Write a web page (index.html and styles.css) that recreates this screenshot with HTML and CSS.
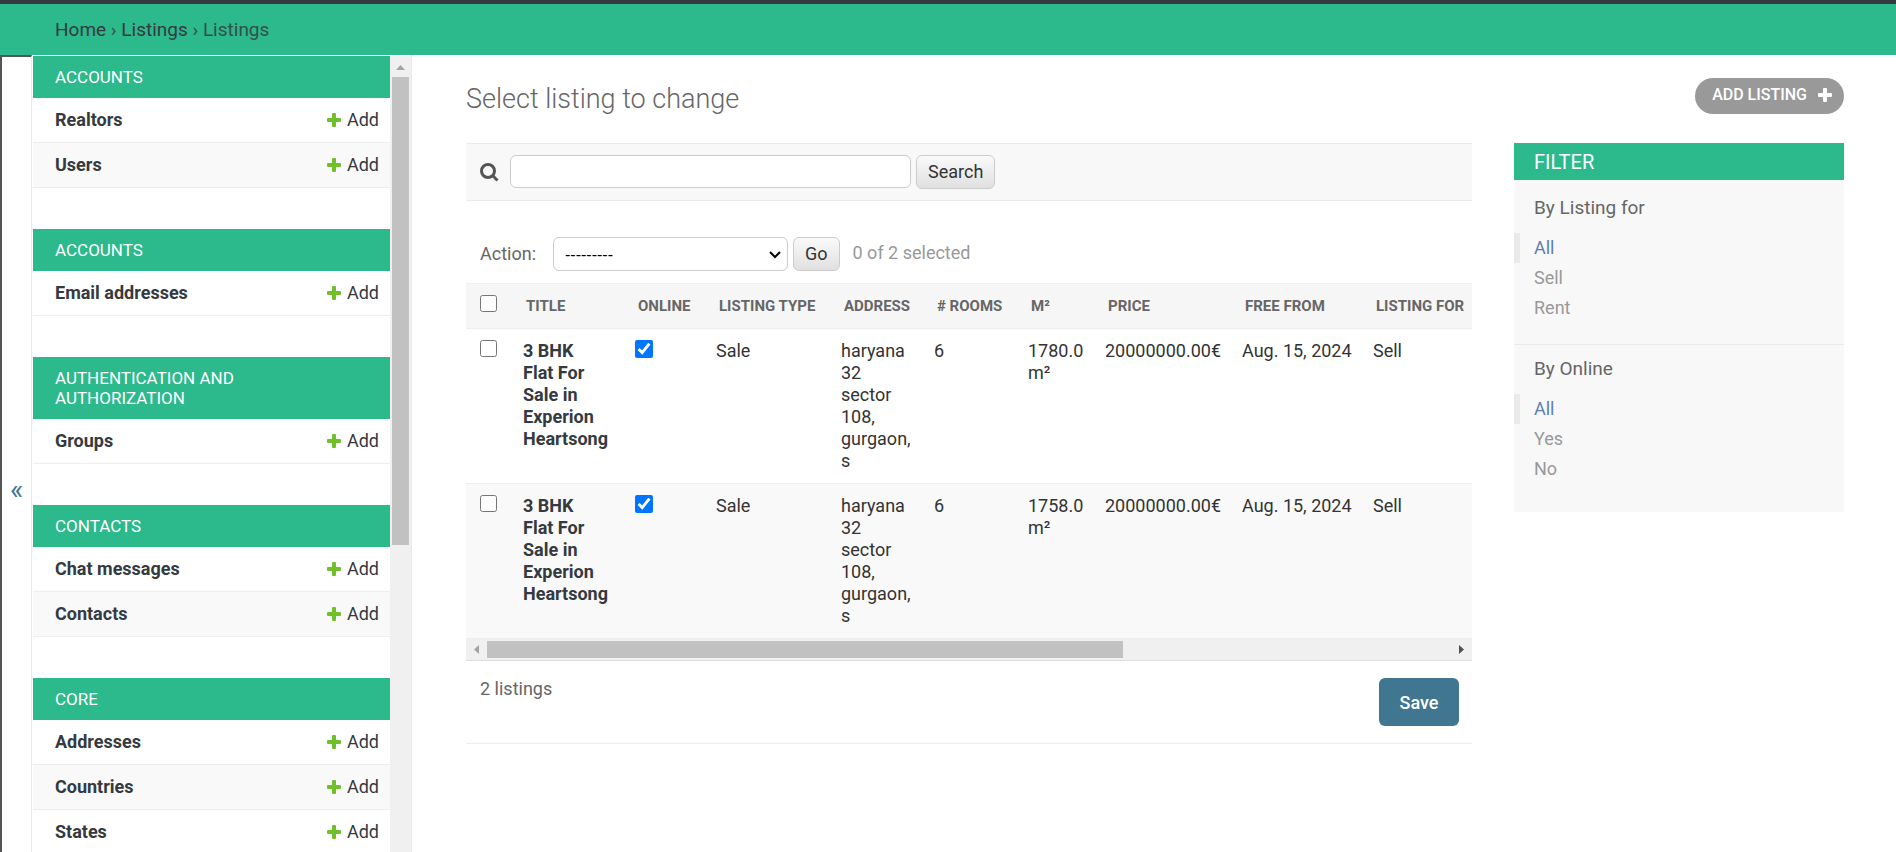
FILE: index.html
```html
<!DOCTYPE html>
<html lang="en">
<head>
<meta charset="utf-8">
<title>Select listing to change</title>
<link rel="stylesheet" href="styles.css">
</head>
<body>
<svg class="sprite" aria-hidden="true">
  <symbol id="plus" viewBox="0 0 14 14"><path d="M5 1q0-1 1-1h2q1 0 1 1v4h4q1 0 1 1v2q0 1-1 1H9v4q0 1-1 1H6q-1 0-1-1V9H1q-1 0-1-1V6q0-1 1-1h4z"/></symbol>
</svg>
<nav class="breadcrumbs" aria-label="Breadcrumbs"><a href="#">Home</a> › <a href="#">Listings</a> › Listings</nav>
<div class="main">
  <button class="toggle" type="button" aria-label="Toggle navigation">«</button>
  <nav class="sidebar" aria-label="Sidebar">
    <div class="apps">
      <section class="app">
        <h2><a href="#">Accounts</a></h2>
        <ul>
          <li><a class="model" href="#">Realtors</a><a class="add" href="#"><svg><use href="#plus"/></svg>Add</a></li>
          <li><a class="model" href="#">Users</a><a class="add" href="#"><svg><use href="#plus"/></svg>Add</a></li>
        </ul>
      </section>
      <section class="app">
        <h2><a href="#">Accounts</a></h2>
        <ul>
          <li><a class="model" href="#">Email addresses</a><a class="add" href="#"><svg><use href="#plus"/></svg>Add</a></li>
        </ul>
      </section>
      <section class="app">
        <h2><a href="#">Authentication and Authorization</a></h2>
        <ul>
          <li><a class="model" href="#">Groups</a><a class="add" href="#"><svg><use href="#plus"/></svg>Add</a></li>
        </ul>
      </section>
      <section class="app">
        <h2><a href="#">Contacts</a></h2>
        <ul>
          <li><a class="model" href="#">Chat messages</a><a class="add" href="#"><svg><use href="#plus"/></svg>Add</a></li>
          <li><a class="model" href="#">Contacts</a><a class="add" href="#"><svg><use href="#plus"/></svg>Add</a></li>
        </ul>
      </section>
      <section class="app">
        <h2><a href="#">Core</a></h2>
        <ul>
          <li><a class="model" href="#">Addresses</a><a class="add" href="#"><svg><use href="#plus"/></svg>Add</a></li>
          <li><a class="model" href="#">Countries</a><a class="add" href="#"><svg><use href="#plus"/></svg>Add</a></li>
          <li><a class="model" href="#">States</a><a class="add" href="#"><svg><use href="#plus"/></svg>Add</a></li>
        </ul>
      </section>
    </div>
    <div class="vbar" aria-hidden="true">
      <svg class="arrow-up" viewBox="0 0 9 5"><path d="M0 5L4.500 0L9 5z"/></svg>
      <div class="vthumb"></div>
    </div>
  </nav>
  <main class="content">
    <header class="title-row">
      <h1>Select listing to change</h1>
      <a class="add-listing" href="#">ADD LISTING<svg><use href="#plus"/></svg></a>
    </header>
    <div class="columns">
      <div class="changelist">
        <form class="search">
          <label for="searchbar" aria-label="Search"><svg class="lens" viewBox="0 0 19 19"><circle cx="8" cy="8" r="6.500"/><path d="M12.800 12.800L17.500 17.500"/></svg></label>
          <input id="searchbar" type="text">
          <button class="btn" type="submit">Search</button>
        </form>
        <form class="actions">
          <label for="action">Action:</label>
          <span class="picker"><select id="action"><option>---------</option></select><svg class="chevron" viewBox="0 0 14 9" aria-hidden="true"><path d="M2 2l5 5 5-5"/></svg></span>
          <button class="btn" type="button">Go</button>
          <span class="counter">0 of 2 selected</span>
        </form>
        <div class="results">
          <table>
            <colgroup><col class="c-check"><col class="c-title"><col class="c-online"><col class="c-type"><col class="c-address"><col class="c-rooms"><col class="c-area"><col class="c-price"><col class="c-free"><col></colgroup>
            <thead>
              <tr><th><input type="checkbox" aria-label="Select all"></th><th>Title</th><th>Online</th><th>Listing type</th><th>Address</th><th># Rooms</th><th>M²</th><th>Price</th><th>Free from</th><th>Listing for</th></tr>
            </thead>
            <tbody>
              <tr><td><input type="checkbox" aria-label="Select listing"></td><td class="name"><a href="#">3 BHK Flat For Sale in Experion Heartsong</a></td><td><input type="checkbox" aria-label="Online" checked></td><td>Sale</td><td>haryana 32 sector 108, gurgaon, s</td><td>6</td><td>1780.0 m²</td><td>20000000.00€</td><td class="date">Aug. 15, 2024</td><td>Sell</td></tr>
              <tr><td><input type="checkbox" aria-label="Select listing"></td><td class="name"><a href="#">3 BHK Flat For Sale in Experion Heartsong</a></td><td><input type="checkbox" aria-label="Online" checked></td><td>Sale</td><td>haryana 32 sector 108, gurgaon, s</td><td>6</td><td>1758.0 m²</td><td>20000000.00€</td><td class="date">Aug. 15, 2024</td><td>Sell</td></tr>
            </tbody>
          </table>
        </div>
        <div class="hbar" aria-hidden="true">
          <svg class="arrow-left" viewBox="0 0 5 9"><path d="M5 0L0 4.500L5 9z"/></svg>
          <div class="htrack"><div class="hthumb"></div></div>
          <svg class="arrow-right" viewBox="0 0 5 9"><path d="M0 0L5 4.500L0 9z"/></svg>
        </div>
        <footer class="paginator"><span>2 listings</span><button class="save" type="button">Save</button></footer>
      </div>
      <aside class="filter">
        <h2>Filter</h2>
        <h3>By Listing for</h3>
        <ul>
          <li class="selected"><a href="#">All</a></li>
          <li><a href="#">Sell</a></li>
          <li><a href="#">Rent</a></li>
        </ul>
        <h3>By Online</h3>
        <ul>
          <li class="selected"><a href="#">All</a></li>
          <li><a href="#">Yes</a></li>
          <li><a href="#">No</a></li>
        </ul>
      </aside>
    </div>
  </main>
</div>
</body>
</html>
```
FILE: styles.css
```css
* { box-sizing: border-box; }
body {
  margin: 0;
  height: 100vh;
  display: flex;
  flex-direction: column;
  overflow: hidden;
  background: #fff;
  color: #333;
  font-family: Roboto, "Liberation Sans", sans-serif;
  font-size: 18px;
  line-height: 22px;
}
a { color: inherit; text-decoration: none; }
ul { list-style: none; margin: 0; padding: 0; }
h1, h2, h3 { margin: 0; font-weight: 400; }
button, input, select { font-family: inherit; font-size: 18px; }
.sprite { display: none; }

.breadcrumbs {
  flex: none;
  padding: 15px 55px 14px;
  border-top: 4px solid #343a40;
  background: #2cb98b;
  color: #32504a;
  font-size: 19px;
}
.breadcrumbs a { color: #343a40; }

.main { flex: 1; display: flex; min-height: 0; }
.toggle {
  flex: none;
  width: 32px;
  padding: 70px 0 0;
  border: solid #555;
  border-width: 2px 0 0 2px;
  border-right: 1px solid #eaeaea;
  background: #fff;
  color: #417690;
  font-size: 28px;
}

.sidebar {
  flex: none;
  display: flex;
  width: 380px;
  padding-top: 1px;
  padding-left: 1px;
  border-right: 1px solid #eaeaea;
  overflow: hidden;
}
.apps { flex: 1; overflow: hidden; }
.app { margin-bottom: 41px; }
.app h2 {
  padding: 11px 66px 11px 22px;
  background: #2cb98b;
  color: #fff;
  font-size: 17px;
  line-height: 20px;
  text-transform: uppercase;
}
.app li {
  display: flex;
  justify-content: space-between;
  padding: 11px 11px 11px 22px;
  border-bottom: 1px solid #eee;
}
.app li:nth-child(even) { background: #f9f9f9; }
.model, .name a { color: #343a40; font-weight: 700; }
.add { display: flex; align-items: center; gap: 6px; color: #343a40; }
.add svg { width: 14px; height: 14px; fill: #70bf2b; }
.vbar {
  flex: none;
  width: 21px;
  padding: 9px 2px 0;
  background: #f0f0f0;
}
.arrow-up { display: block; width: 9px; height: 5px; margin: 0 4px 7px; fill: #a3a3a3; }
.vthumb { width: 17px; height: 59.5%; background: #c1c1c1; }

.content { flex: 1; min-width: 0; padding: 23px 52px 0 54px; }
.title-row { display: flex; justify-content: space-between; height: 65px; }
h1 { padding-top: 4px; color: #666; font-size: 27px; font-weight: 300; line-height: 34px; }
.add-listing {
  display: flex;
  align-items: center;
  gap: 11px;
  height: 36px;
  padding: 0 12px 2px 17px;
  border-radius: 18px;
  background: #999;
  color: #fff;
  font-size: 16px;
  font-weight: 500;
}
.add-listing svg { width: 14px; height: 14px; fill: #fff; }

.columns { display: flex; align-items: flex-start; gap: 42px; }
.changelist { flex: 1; min-width: 0; border-bottom: 1px solid #eee; }
.search {
  display: flex;
  align-items: flex-start;
  padding: 11px 14px;
  border: solid #eaeaea;
  border-width: 1px 0;
  background: #f8f8f8;
}
.search label { display: flex; width: 30px; padding-top: 8px; }
.lens { width: 19px; height: 19px; fill: none; stroke: #555; stroke-width: 3; }
.search input {
  width: 401px;
  height: 33px;
  margin-right: 5px;
  padding: 3px 7px;
  border: 1px solid #ccc;
  border-radius: 6px;
  background: #fff;
}
.btn {
  height: 34px;
  padding: 0 11px 2px;
  border: 1px solid #ccc;
  border-radius: 6px;
  background: linear-gradient(#fafafa, #e0e0e0);
  color: #333;
}
.actions {
  display: flex;
  align-items: center;
  padding: 36px 14px 12px;
  color: #666;
}
.actions label { width: 73px; }
.picker { position: relative; display: flex; width: 235px; margin-right: 5px; }
.picker select {
  appearance: none;
  width: 100%;
  height: 34px;
  padding: 0 11px;
  border: 1px solid #ccc;
  border-radius: 6px;
  background: #fff;
  color: #000;
  font-family: "Liberation Sans", sans-serif;
  font-size: 16px;
}
.chevron {
  position: absolute;
  top: 13px;
  right: 6px;
  width: 14px;
  height: 9px;
  fill: none;
  stroke: #000;
  stroke-width: 2;
  pointer-events: none;
}
.counter { margin-left: 13px; padding-bottom: 3px; color: #999; }

.results { overflow: hidden; }
table { width: 100%; table-layout: fixed; border-collapse: collapse; }
.c-check { width: 46px; }
.c-title { width: 112px; }
.c-online { width: 81px; }
.c-type { width: 125px; }
.c-address { width: 93px; }
.c-rooms { width: 94px; }
.c-area { width: 77px; }
.c-price { width: 137px; }
.c-free { width: 131px; }
th, td { text-align: left; vertical-align: top; border-bottom: 1px solid #eee; }
th {
  padding: 11px 0 11px 14px;
  border-top: 1px solid #eee;
  background: #f6f6f6;
  color: #666;
  font-size: 15px;
  line-height: 22px;
  text-transform: uppercase;
  white-space: nowrap;
}
td { padding: 11px 10px 11px 11px; }
tbody tr:nth-child(even) { background: #f9f9f9; }
td:first-child { padding-left: 14px; }
.name { padding-right: 20px; }
.date { white-space: nowrap; }
input[type="checkbox"] { display: block; width: 17px; height: 17px; margin: 0; }
input[type="checkbox"]:checked { width: 18px; height: 18px; accent-color: #0075ff; }

.hbar {
  display: flex;
  align-items: center;
  gap: 8px;
  padding: 2px 8px;
  border-bottom: 1px solid #ddd;
  background: #f0f0f0;
}
.hbar svg { flex: none; width: 5px; height: 9px; fill: #a3a3a3; }
.hbar .arrow-right { fill: #505050; }
.htrack { flex: 1; }
.hthumb { width: 66%; height: 17px; background: #c1c1c1; }

.paginator {
  display: flex;
  justify-content: space-between;
  align-items: flex-start;
  padding: 17px 13px 17px 14px;
  color: #666;
}
.save {
  min-width: 80px;
  height: 48px;
  padding: 0 20px;
  border: 0;
  border-radius: 6px;
  background: #417690;
  color: #fff;
  font-weight: 500;
}

.filter { flex: none; width: 330px; padding-bottom: 7px; background: #f8f8f8; }
.filter h2 {
  padding: 8px 20px 7px;
  background: #2cb98b;
  color: #fff;
  font-size: 20px;
  text-transform: uppercase;
}
.filter h3 { padding: 17px 20px 14px; color: #666; font-size: 19px; }
.filter ul { padding-bottom: 21px; }
.filter ul + h3 { padding-top: 13px; border-top: 1px solid #eaeaea; }
.filter li { padding: 4px 20px; color: #999; }
.filter .selected { padding-left: 14px; border-left: 6px solid #eaeaea; color: #5b80b2; }
```
